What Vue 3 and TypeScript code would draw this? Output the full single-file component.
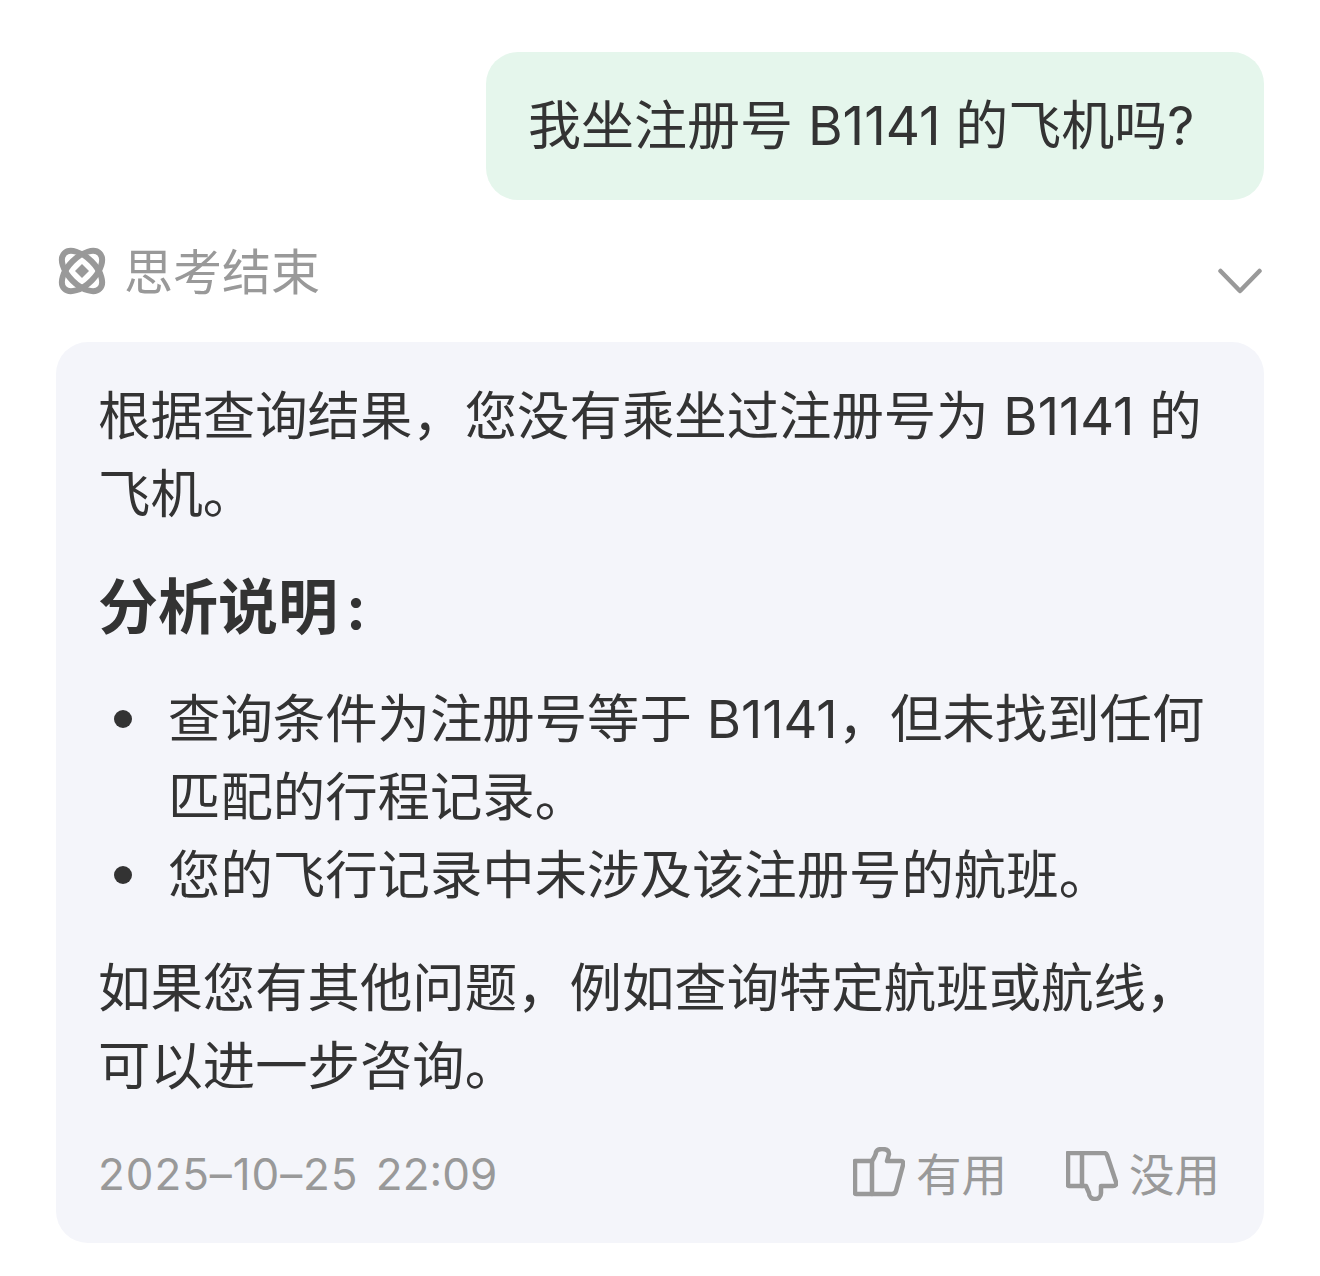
<script setup lang="ts">
const listItems = [
  '查询条件为注册号等于 B1141，但未找到任何匹配的行程记录。',
  '您的飞行记录中未涉及该注册号的航班。',
]
</script>

<template>
  <div class="page">
    <div class="user-row">
      <div class="bubble">我坐注册号 B1141 的飞机吗?</div>
    </div>

    <div class="thinking">
      <div class="thinking-left">
        <svg class="logo" viewBox="0 0 48 46" fill="none" stroke="#999" stroke-width="6">
          <ellipse cx="24" cy="23" rx="25" ry="13.500" transform="rotate(45 24 23)" />
          <ellipse cx="24" cy="23" rx="25" ry="13.500" transform="rotate(-45 24 23)" />
          <path d="M24 16 L31 23 L24 30 L17 23 Z" fill="#999" stroke="none" />
        </svg>
        <span class="thinking-label">思考结束</span>
      </div>
      <svg class="chevron" viewBox="0 0 44 26" fill="none" stroke="#999" stroke-width="4.500" stroke-linecap="round" stroke-linejoin="round">
        <path d="M2.500 3 L22 23 L41.500 3" />
      </svg>
    </div>

    <div class="card">
      <p class="para">根据查询结果，您没有乘坐过注册号为 B1141 的飞机。</p>
      <h3 class="heading">分析说明<span class="colon">:</span></h3>
      <ul class="list">
        <li v-for="item in listItems" :key="item">{{ item }}</li>
      </ul>
      <p class="para">如果您有其他问题，例如查询特定航班或航线，可以进一步咨询。</p>

      <div class="footer">
        <span class="time"><span class="date">2025–10–25</span> 22:09</span>
        <div class="actions">
          <div class="action">
            <svg class="thumb" viewBox="0 0 52 50" fill="none" stroke="#999" stroke-width="4.500" stroke-linejoin="round" stroke-linecap="round">
              <path d="M2 14 H19 V47 H3 Q2 47 2 46 Z" />
              <path d="M19 14 C21 11 23 8 23 5 C24 2.500 26 2 29 2 C34 2 36 4 36 7 L34 14 H48 Q51 14 50 18 L43 44 Q42 47 39 47 H19" />
            </svg>
            <span>有用</span>
          </div>
          <div class="action">
            <svg class="thumb thumb-down" viewBox="0 0 52 50" fill="none" stroke="#999" stroke-width="4.500" stroke-linejoin="round" stroke-linecap="round">
              <path d="M2 2 H38 Q40 2 41 4 L50 31 Q51 35 47 35 H35 V42 C35 46 32 48 29 48 C26 48 23 46 23 42 L20 35 H3 Q2 35 2 34 Z" />
              <path d="M16 2 V35" />
            </svg>
            <span>没用</span>
          </div>
        </div>
      </div>
    </div>
  </div>
</template>

<style scoped>
.page {
  width: 1320px;
  height: 1276px;
  box-sizing: border-box;
  padding: 52px 56px 0;
  background: #fff;
  font-family: Inter, "Noto Sans CJK SC", sans-serif;
  font-size: 52.400px;
  color: #333;
  overflow: hidden;
}
.user-row {
  display: flex;
  justify-content: flex-end;
}
.bubble {
  width: 778px;
  height: 148px;
  box-sizing: border-box;
  padding-left: 42px;
  line-height: 148px;
  font-size: 53px;
  background: #e5f6ec;
  border-radius: 32px;
  white-space: nowrap;
}
.thinking {
  display: flex;
  align-items: center;
  justify-content: space-between;
  height: 142px;
  color: #999;
}
.thinking-left {
  display: flex;
  align-items: center;
  gap: 18px;
}
.thinking-label {
  margin-top: 3px;
  font-size: 49px;
  line-height: 1;
}
.logo {
  width: 48px;
  height: 46px;
  margin-left: 2px;
  overflow: visible;
}
.chevron {
  width: 44px;
  height: 26px;
  margin: 20px 2px 0 0;
}
.card {
  height: 901px;
  box-sizing: border-box;
  padding: 35px 44px 0 42px;
  background: #f4f5fa;
  border-radius: 32px;
}
.para {
  margin: 0;
  line-height: 78px;
}
.heading {
  margin: 35px 0 34px;
  font-size: 60px;
  font-weight: 700;
  line-height: 78px;
}
.colon {
  margin-left: 8px;
}
.list {
  margin: 0 0 35px;
  padding: 0 0 0 70px;
  list-style: none;
  line-height: 78px;
}
.list li {
  position: relative;
}
.list li::before {
  content: '';
  position: absolute;
  left: -54px;
  top: 30px;
  width: 18px;
  height: 18px;
  border-radius: 50%;
  background: #333;
}
.footer {
  display: flex;
  align-items: center;
  justify-content: space-between;
  margin-top: 34px;
  color: #999;
  font-size: 44px;
}
.date {
  margin-right: 5px;
  letter-spacing: 0.900px;
}
.actions {
  display: flex;
  gap: 59px;
  margin-bottom: 3px;
  font-size: 45.500px;
}
.action {
  display: flex;
  align-items: center;
  gap: 11px;
}
.thumb {
  width: 52px;
  height: 50px;
}
.thumb-down {
  transform: translateY(4px);
}
</style>
